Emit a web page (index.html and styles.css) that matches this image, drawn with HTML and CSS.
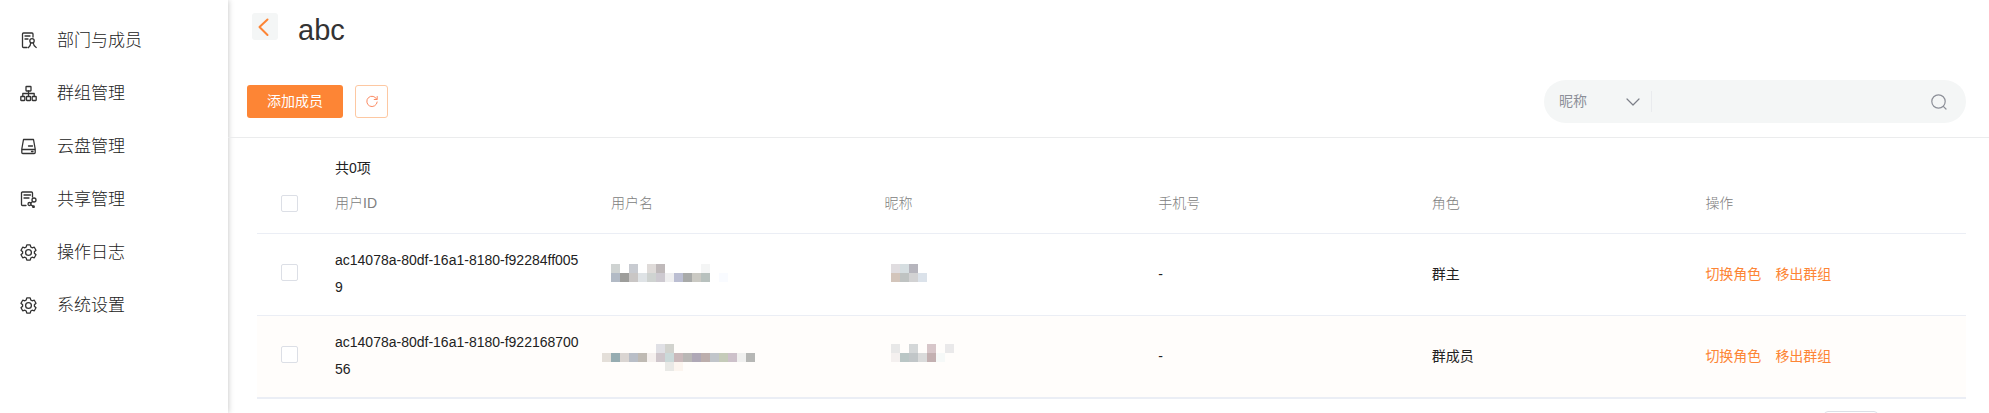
FILE: index.html
```html
<!DOCTYPE html>
<html lang="zh-CN">
<head>
    <meta charset="UTF-8">
    <meta name="viewport" content="width=device-width, initial-scale=1.0">
    <title>群组管理</title>
    <link rel="stylesheet" href="styles.css">
</head>
<body>

<nav class="sidebar">
    <a class="nav-item" href="#">
        <svg class="nav-icon" viewBox="0 0 17 17">
            <path d="M7 15.500H3.500a1 1 0 0 1-1-1V2a1 1 0 0 1 1-1h8.500a1 1 0 0 1 1 1v3M5 4h5M5 7h3"/>
            <circle cx="12" cy="8.800" r="2.200"/>
            <path d="M10.700 10.800c0 2.200-.7 3.700-2.400 4.900M13.200 10.800c.2 2 1 3.500 3 4.700"/>
        </svg>
        <span>部门与成员</span>
    </a>
    <a class="nav-item" href="#">
        <svg class="nav-icon" viewBox="0 0 17 17">
            <rect x="6" y="1.500" width="5" height="4.500" rx=".5"/>
            <path d="M8.500 6v5M2.800 11V8.500h11.400V11"/>
            <rect x=".8" y="11.500" width="4" height="4" rx=".5"/>
            <rect x="6.500" y="11.500" width="4" height="4" rx=".5"/>
            <rect x="12.200" y="11.500" width="4" height="4" rx=".5"/>
        </svg>
        <span>群组管理</span>
    </a>
    <a class="nav-item" href="#">
        <svg class="nav-icon" viewBox="0 0 17 17">
            <path d="M3.500 1.500h10l1.700 9.500v3.500a1 1 0 0 1-1 1H2.800a1 1 0 0 1-1-1V11zM1.800 11.500h13.400M8.500 8h4M11.500 13.500h1.500"/>
        </svg>
        <span>云盘管理</span>
    </a>
    <a class="nav-item" href="#">
        <svg class="nav-icon" viewBox="0 0 17 17">
            <path d="M6 14.500H2.500a1 1 0 0 1-1-1V2a1 1 0 0 1 1-1h9a1 1 0 0 1 1 1v4M4 4h6.500M4 7h5"/>
            <circle cx="14" cy="9" r="2"/>
            <circle cx="9.500" cy="13" r="1.500"/>
            <circle cx="13.500" cy="15.700" r=".8"/>
            <path d="M11 12l1.700-1.600M10.900 13.900l2 1.300"/>
        </svg>
        <span>共享管理</span>
    </a>
    <a class="nav-item" href="#">
        <svg class="nav-icon" viewBox="0 0 17 17">
            <path d="M6.800.8h3.400l.6 2.200 1.300.8 2.200-.6L16 6.200l-1.600 1.600v1.400l1.600 1.600-1.700 3-2.200-.6-1.300.8-.6 2.200H6.800L6.200 14l-1.300-.8-2.200.6-1.700-3 1.600-1.600V7.800L1 6.200l1.700-3 2.200.6L6.200 3z"/>
            <circle cx="8.500" cy="8.500" r="2.900"/>
        </svg>
        <span>操作日志</span>
    </a>
    <a class="nav-item" href="#">
        <svg class="nav-icon" viewBox="0 0 17 17">
            <path d="M6.800.8h3.400l.6 2.200 1.300.8 2.200-.6L16 6.200l-1.600 1.600v1.400l1.600 1.600-1.700 3-2.200-.6-1.300.8-.6 2.200H6.800L6.200 14l-1.300-.8-2.200.6-1.700-3 1.600-1.600V7.800L1 6.200l1.700-3 2.200.6L6.200 3z"/>
            <circle cx="8.500" cy="8.500" r="2.900"/>
        </svg>
        <span>系统设置</span>
    </a>
</nav>

<main class="main">
    <header class="page-header">
        <button class="back" type="button" aria-label="返回">
            <svg width="26" height="27" viewBox="0 0 26 27"><path d="M15.500 6.500l-8 7.500 8 8"/></svg>
        </button>
        <h1 class="title">abc</h1>
    </header>

    <div class="toolbar">
        <button class="btn-add" type="button">添加成员</button>
        <button class="btn-refresh" type="button" aria-label="刷新">
            <svg width="14" height="14" viewBox="0 0 14 14"><path d="M11.800 4.300A5.200 5.200 0 1 0 12.200 7M12.200 1.500v3H9.200"/></svg>
        </button>
        <form class="search">
            <select class="search-type" aria-label="搜索类型">
                <option>昵称</option>
                <option>用户名</option>
            </select>
            <svg class="chevron" width="14" height="8" viewBox="0 0 14 8"><path d="M1 1l6 6 6-6"/></svg>
            <input class="search-input" type="text" aria-label="搜索内容">
            <button class="search-btn" type="button" aria-label="搜索">
                <svg width="16" height="16" viewBox="0 0 16 16"><circle cx="7.500" cy="7.500" r="6.700"/><path d="M12.300 12.300l2.700 2.700"/></svg>
            </button>
        </form>
    </div>

    <div class="content">
        <p class="total">共0项</p>
        <table class="members">
            <thead>
                <tr>
                    <th class="check"><input type="checkbox" aria-label="全选"></th>
                    <th class="user-id">用户ID</th>
                    <th>用户名</th>
                    <th>昵称</th>
                    <th>手机号</th>
                    <th>角色</th>
                    <th>操作</th>
                </tr>
            </thead>
            <tbody>
                <tr>
                    <td class="check"><input type="checkbox" aria-label="选择群主"></td>
                    <td>ac14078a-80df-16a1-8180-f92284ff0059</td>
                    <td>
                        <svg class="mosaic" viewBox="0 0 180 18">
                            <path fill="#cfd3d2" d="M0 0h9v9H0z"/>
                            <path fill="#c8cbd1" d="M18 0h9v9h-9z"/>
                            <path fill="#dfdbd9" d="M36 0h9v9h-9z"/>
                            <path fill="#bfb9ba" d="M45 0h9v9h-9z"/>
                            <path fill="#f4f5f5" d="M90 0h9v9h-9z"/>
                            <path fill="#b2bac5" d="M0 9h9v9H0z"/>
                            <path fill="#9d9d9b" d="M9 9h9v9H9z"/>
                            <path fill="#c9c6c5" d="M18 9h9v9h-9z"/>
                            <path fill="#dfe3e6" d="M27 9h9v9h-9z"/>
                            <path fill="#cfd3d1" d="M36 9h9v9h-9z"/>
                            <path fill="#cdc9d0" d="M45 9h9v9h-9z"/>
                            <path fill="#efeff0" d="M54 9h9v9h-9z"/>
                            <path fill="#bbbed2" d="M63 9h9v9h-9z"/>
                            <path fill="#a8aaa9" d="M72 9h9v9h-9z"/>
                            <path fill="#cac9c3" d="M81 9h9v9h-9z"/>
                            <path fill="#b8c1be" d="M90 9h9v9h-9z"/>
                            <path fill="#f9fbff" d="M108 9h9v9h-9z"/>
                        </svg>
                    </td>
                    <td>
                        <svg class="mosaic" viewBox="0 0 180 18">
                            <path fill="#e0dde0" d="M6 0h9v9H6z"/>
                            <path fill="#d6dee1" d="M15 0h9v9h-9z"/>
                            <path fill="#b6b5bd" d="M24 0h9v9h-9z"/>
                            <path fill="#d3c5bb" d="M6 9h9v9H6z"/>
                            <path fill="#bfc3c2" d="M15 9h9v9h-9z"/>
                            <path fill="#d2d2d3" d="M24 9h9v9h-9z"/>
                            <path fill="#dbe2ea" d="M33 9h9v9h-9z"/>
                        </svg>
                    </td>
                    <td>-</td>
                    <td>群主</td>
                    <td><a class="action" href="#">切换角色</a><a class="action" href="#">移出群组</a></td>
                </tr>
                <tr>
                    <td class="check"><input type="checkbox" aria-label="选择群成员"></td>
                    <td>ac14078a-80df-16a1-8180-f92216870056</td>
                    <td>
                        <svg class="mosaic" viewBox="0 0 180 18">
                            <path fill="#e0e0e5" d="M45-2h9v9h-9z"/>
                            <path fill="#d2d3ce" d="M54-2h9v9h-9z"/>
                            <path fill="#e4dfd9" d="M-9 7h9v9h-9z"/>
                            <path fill="#96acb1" d="M0 7h9v9H0z"/>
                            <path fill="#dad5d2" d="M9 7h9v9H9z"/>
                            <path fill="#b9bec7" d="M18 7h9v9h-9z"/>
                            <path fill="#bfbab3" d="M27 7h9v9h-9z"/>
                            <path fill="#f5f0ee" d="M36 7h9v9h-9z"/>
                            <path fill="#cfc6cb" d="M45 7h9v9h-9z"/>
                            <path fill="#cbd9d9" d="M54 7h9v9h-9z"/>
                            <path fill="#cab9bb" d="M63 7h9v9h-9z"/>
                            <path fill="#b9b7b5" d="M72 7h9v9h-9z"/>
                            <path fill="#afa8b6" d="M81 7h9v9h-9z"/>
                            <path fill="#bcaeac" d="M90 7h9v9h-9z"/>
                            <path fill="#c1c5ca" d="M99 7h9v9h-9z"/>
                            <path fill="#c5cbb9" d="M108 7h9v9h-9z"/>
                            <path fill="#cdc1ca" d="M117 7h9v9h-9z"/>
                            <path fill="#f0f0ef" d="M126 7h9v9h-9z"/>
                            <path fill="#b6b7b5" d="M135 7h9v9h-9z"/>
                            <path fill="#e9e9e6" d="M54 16h9v9h-9z"/>
                            <path fill="#fcf5ef" d="M63 16h9v9h-9z"/>
                        </svg>
                    </td>
                    <td>
                        <svg class="mosaic" viewBox="0 0 180 18">
                            <path fill="#e8e8e8" d="M6-2h9v9H6z"/>
                            <path fill="#d4d7d8" d="M24-2h9v9h-9z"/>
                            <path fill="#d7c6c9" d="M42-2h9v9h-9z"/>
                            <path fill="#eae9ea" d="M60-2h9v9h-9z"/>
                            <path fill="#f4f0ef" d="M6 7h9v9H6z"/>
                            <path fill="#bac6c5" d="M15 7h9v9h-9z"/>
                            <path fill="#c1c6c8" d="M24 7h9v9h-9z"/>
                            <path fill="#dadbdb" d="M33 7h9v9h-9z"/>
                            <path fill="#c3b0b1" d="M42 7h9v9h-9z"/>
                            <path fill="#f6f9f8" d="M51 7h9v9h-9z"/>
                        </svg>
                    </td>
                    <td>-</td>
                    <td>群成员</td>
                    <td><a class="action" href="#">切换角色</a><a class="action" href="#">移出群组</a></td>
                </tr>
            </tbody>
        </table>
        <div class="pager">
            <input class="pager-input" type="text" aria-label="页码">
        </div>
    </div>
</main>

</body>
</html>
```

FILE: styles.css
```css
* {
    box-sizing: border-box;
}

body {
    display: flex;
    height: 100vh;
    margin: 0;
    font-family: "Liberation Sans", "Noto Sans CJK SC", sans-serif;
    font-size: 14px;
    line-height: 27px;
    color: #222;
    background: #fff;
}

button,
input,
select {
    margin: 0;
    padding: 0;
    font: inherit;
    border: 0;
    outline: 0;
    background: none;
    appearance: none;
}

button {
    cursor: pointer;
}

svg {
    display: block;
    fill: none;
    stroke-linecap: round;
    stroke-linejoin: round;
}

/* sidebar */
.sidebar {
    flex: 0 0 228px;
    padding-top: 14px;
    box-shadow: 0 0 6px rgba(0, 0, 0, 0.25);
}

.nav-item {
    display: flex;
    align-items: center;
    gap: 20px;
    height: 53px;
    padding-left: 20px;
    font-size: 17px;
    font-weight: 300;
    color: #222;
    text-decoration: none;
}

.nav-icon {
    width: 17px;
    height: 17px;
    stroke: #333;
    stroke-width: 1.3;
}

/* page */
.main {
    flex: 1;
    min-width: 0;
    overflow: hidden;
}

.page-header {
    display: flex;
    align-items: flex-start;
    gap: 20px;
    height: 80px;
    padding: 13px 24px 0;
}

.back {
    width: 26px;
    height: 27px;
    border-radius: 3px;
    background: #f4f6f6;
}

.back svg {
    stroke: #fd8535;
    stroke-width: 2;
}

.title {
    margin: 0;
    font-size: 29px;
    font-weight: 400;
    line-height: 34px;
    color: #333;
}

.toolbar {
    display: flex;
    align-items: center;
    gap: 12px;
    padding: 0 23px 14px 19px;
    border-bottom: 1px solid #ebeced;
}

.btn-add {
    width: 96px;
    height: 33px;
    border-radius: 3px;
    color: #fff;
    background: #fd8535;
}

.btn-refresh {
    display: flex;
    align-items: center;
    justify-content: center;
    width: 33px;
    height: 33px;
    border: 1px solid #fdc8a2;
    border-radius: 3px;
}

.btn-refresh svg {
    stroke: #fb8a62;
}

.search {
    display: flex;
    align-items: center;
    width: 422px;
    height: 43px;
    margin-left: auto;
    padding: 0 19px 0 15px;
    border-radius: 22px;
    background: #f4f6f6;
}

.search-type {
    width: 81px;
    margin-right: -14px;
    color: #8c8f98;
}

.chevron {
    margin-right: 11px;
    stroke: #7c7f88;
    stroke-width: 1.2;
    pointer-events: none;
}

.search-input {
    flex: 1;
    min-width: 0;
    height: 21px;
    padding: 0 8px;
    border-left: 1px solid #e9ebee;
}

.search-btn svg {
    stroke: #8c8f98;
    stroke-width: 1.2;
}

/* member list */
.content {
    padding: 17px 23px 0 29px;
}

.total {
    margin: 0;
    padding-left: 78px;
}

.members {
    width: 100%;
    table-layout: fixed;
    border-spacing: 0;
    border-bottom: 1px solid #ebeef5;
}

.members th {
    padding: 8px 13px 16px;
    border-bottom: 1px solid #ebeef5;
    font-weight: 300;
    text-align: left;
    color: #808080;
}

.members td {
    padding: 13px 13px 14px;
    border-bottom: 1px solid #ebeef5;
    word-break: break-all;
}

.members tbody tr:nth-child(even) {
    background: #fffdfb;
}

.members .check {
    width: 65px;
    padding-left: 24px;
    padding-right: 24px;
}

.members .user-id {
    width: 276px;
}

.check input {
    display: block;
    width: 17px;
    height: 17px;
    border: 1px solid #dcdfe6;
    border-radius: 2px;
    background: #fff;
}

td.check input {
    margin-bottom: 4px;
}

.mosaic {
    width: 180px;
    height: 18px;
    margin-bottom: 2px;
    overflow: visible;
    shape-rendering: crispEdges;
}

.action {
    margin-right: 14px;
    color: #fd8535;
    text-decoration: none;
}

.pager {
    display: flex;
    justify-content: flex-end;
    padding: 12px 88px 0 0;
}

.pager-input {
    width: 54px;
    height: 33px;
    border: 1px solid #dcdfe6;
    border-radius: 4px;
}
```
